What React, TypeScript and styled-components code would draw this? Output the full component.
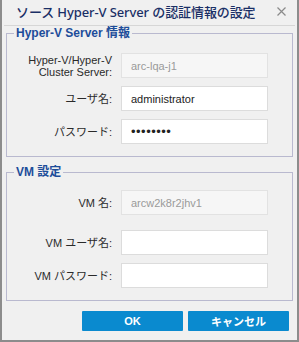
import React from "react";
import styled, { createGlobalStyle } from "styled-components";

const GlobalStyle = createGlobalStyle`
  html, body {
    margin: 0;
    padding: 0;
    background: #f0f0f0;
  }
  * {
    box-sizing: border-box;
  }
`;

interface IField {
  label: string[];
  value: string;
  disabled?: boolean;
  password?: boolean;
  gap?: number;
}

const serverFields: IField[] = [
  { label: ["Hyper-V/Hyper-V", "Cluster Server:"], value: "arc-lqa-j1", disabled: true },
  { label: ["ユーザ名:"], value: "administrator", gap: 8 },
  { label: ["パスワード:"], value: "12345678", password: true, gap: 8 },
];

const vmFields: IField[] = [
  { label: ["VM 名:"], value: "arcw2k8r2jhv1", disabled: true },
  { label: ["VM ユーザ名:"], value: "", gap: 15 },
  { label: ["VM パスワード:"], value: "", password: true, gap: 8 },
];

function FieldRows({ fields }: { fields: IField[] }) {
  return (
    <>
      {fields.map((f) => (
        <Row key={f.label.join()} $gap={f.gap ?? 0}>
          <Label>
            {f.label.map((line) => (
              <span key={line}>{line}</span>
            ))}
          </Label>
          <Input
            type={f.password ? "password" : "text"}
            defaultValue={f.value}
            disabled={f.disabled}
          />
        </Row>
      ))}
    </>
  );
}

export default function App() {
  return (
    <>
      <GlobalStyle />
      <Window>
        <TitleBar>
          <Title>ソース Hyper-V Server の認証情報の設定</Title>
          <CloseButton aria-label="close">
            <svg width="9" height="9" viewBox="0 0 9 9">
              <path d="M0.5 0.5 L8.5 8.5 M8.5 0.5 L0.5 8.5" stroke="#8a8a8a" strokeWidth="1.2" />
            </svg>
          </CloseButton>
        </TitleBar>
        <Body>
          <Group $top={13}>
            <Legend>Hyper-V Server 情報</Legend>
            <FieldRows fields={serverFields} />
          </Group>
          <Group $top={11}>
            <Legend>VM 設定</Legend>
            <FieldRows fields={vmFields} />
          </Group>
          <Footer>
            <Button>OK</Button>
            <Button>キャンセル</Button>
          </Footer>
        </Body>
      </Window>
    </>
  );
}

const Window = styled.div`
  width: 299px;
  height: 342px;
  border: 2px solid #8c8c8c;
  border-top: none;
  background: #f0f0f0;
  display: flex;
  flex-direction: column;
  font-family: "Liberation Sans", "Noto Sans CJK JP", sans-serif;
`;

const TitleBar = styled.div`
  height: 26px;
  flex-shrink: 0;
  display: flex;
  align-items: center;
  justify-content: space-between;
  padding: 0 9px 2px 12px;
  margin: 0 2px;
  border-bottom: 1px solid #d6d6d6;
`;

const Title = styled.div`
  font-family: "Noto Sans", "Noto Sans CJK JP", sans-serif;
  font-size: 13px;
  font-weight: 500;
  color: #1a2f66;
  letter-spacing: -0.1px;
`;

const CloseButton = styled.div`
  display: flex;
  width: 9px;
  height: 9px;
`;

const Body = styled.div`
  display: flex;
  flex-direction: column;
  padding: 0 4px 0 4px;
`;

const Group = styled.fieldset<{ $top: number }>`
  margin: 0 0 8px 0;
  padding: ${(p) => p.$top}px 0 12px 0;
  border: 1px solid #b9b9cf;
  display: flex;
  flex-direction: column;
`;

const Legend = styled.legend`
  margin-left: 7px;
  padding: 0 2px;
  font-size: 12px;
  line-height: 14px;
  font-weight: bold;
  color: #1d4d9a;
`;

const Row = styled.div<{ $gap: number }>`
  display: grid;
  grid-template-columns: 105px 147px;
  column-gap: 9px;
  align-items: center;
  margin-top: ${(p) => p.$gap}px;
`;

const Label = styled.label`
  display: flex;
  flex-direction: column;
  align-items: flex-end;
  font-size: 11px;
  line-height: 12px;
  color: #2a2a2a;
  text-align: right;
`;

const Input = styled.input`
  height: 25px;
  width: 147px;
  margin: 0;
  padding: 0 9px;
  border: 1px solid #dcdcdc;
  border-radius: 0;
  background: #fff;
  font-family: "Liberation Sans", "Noto Sans CJK JP", sans-serif;
  font-size: 11px;
  color: #222;
  outline: none;

  &[type="password"] {
    font-size: 13px;
    letter-spacing: 0.5px;
  }

  &:disabled {
    background: #f6f6f6;
    border-color: #e2e2e2;
    color: #9a9a9a;
  }
`;

const Footer = styled.div`
  display: flex;
  justify-content: flex-end;
  gap: 5px;
  margin-top: 2px;
  padding-right: 4px;
`;

const Button = styled.button`
  width: 101px;
  height: 20px;
  padding: 0;
  border: none;
  border-radius: 1px;
  background: #0a8acf;
  color: #fff;
  font-family: "Liberation Sans", "Noto Sans CJK JP", sans-serif;
  font-size: 11px;
  font-weight: bold;
`;
